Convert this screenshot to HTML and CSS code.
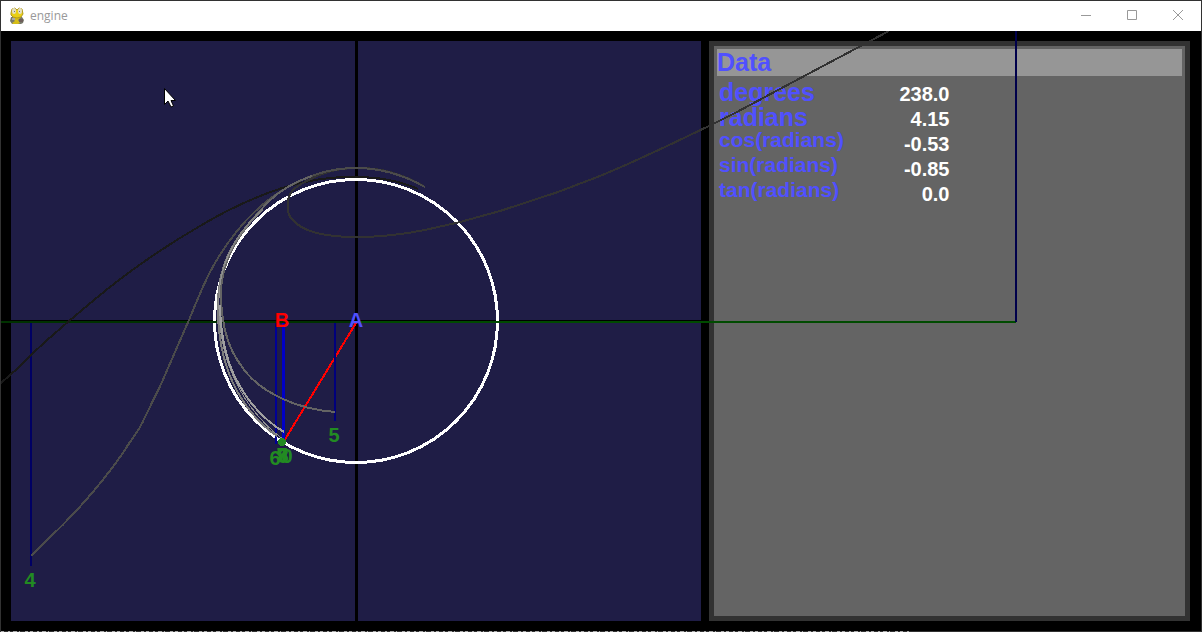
FILE: index.html
```html
<!DOCTYPE html>
<html lang="en">
<head>
<meta charset="utf-8">
<title>engine</title>
<link rel="stylesheet" href="styles.css">
</head>
<body>
<div class="window">
  <header class="titlebar">
    <svg class="logo" viewBox="0 0 16 18" width="16" height="18" aria-hidden="true">
      <path d="M2 10h11l2 3-1 3-2 1H3l-2-3z" fill="#77796b"/>
      <path d="M4 10h8l-3 3 2 3-2 1H4l-1-1 3-2-2-2z" fill="#d5bd16"/>
      <path d="M2 6l1-4 3-1 2 2 2-2 3 1 1 5-2 3-4 1-4-1-2-2z" fill="#e9cf16" stroke="#b39b1c"/>
      <ellipse cx="5" cy="4" rx="2" ry="3" fill="#e4dfc4"/><ellipse cx="11" cy="4" rx="2" ry="3" fill="#e4dfc4"/>
      <path d="M5 4h1v1H5zM10 4h1v1h-1z" fill="#777"/>
      <path d="M3 11h3v2H3z" fill="#aaa"/><path d="M10 12h4v3h-4z" fill="#6e5e5a"/>
    </svg>
    <h1 class="title">engine</h1>
    <button class="control" aria-label="Minimize"><svg width="12" height="12" viewBox="0 0 12 12"><path d="M1 5.500h10"/></svg></button>
    <button class="control" aria-label="Maximize"><svg width="12" height="12" viewBox="0 0 12 12"><path d="M1.500 .5h9v9h-9z"/></svg></button>
    <button class="control" aria-label="Close"><svg width="12" height="12" viewBox="0 0 12 12"><path d="M1 0l10 10M11 0L1 10"/></svg></button>
  </header>
  <main class="stage">
    <section class="plot" aria-label="Unit circle"></section>
    <aside class="data">
      <h2 class="data-title">Data</h2>
      <table class="values">
        <tr><th scope="row" class="large">degrees</th><td>238.0</td></tr>
        <tr><th scope="row" class="large">radians</th><td>4.15</td></tr>
        <tr><th scope="row">cos(radians)</th><td>-0.53</td></tr>
        <tr><th scope="row">sin(radians)</th><td>-0.85</td></tr>
        <tr><th scope="row">tan(radians)</th><td>0.0</td></tr>
      </table>
    </aside>
    <svg class="canvas" aria-label="Circle approximation curves">
      <g transform="translate(-1 -31)" fill="none" shape-rendering="crispEdges">
        <path d="M356.500 41V621M11 321.500H701" stroke="#000" stroke-width="3"/>
        <circle cx="356" cy="321" r="141.500" stroke="#fff" stroke-width="3"/>
        <path d="M356 323L284 441" stroke="#f00" stroke-width="2"/>
        <g stroke-width="2">
          <path d="M1 322H356" stroke="#003200"/>
          <path d="M356 322H1016" stroke="#004b00"/>
          <path d="M1016 31V322" stroke="#00004b"/>
          <path d="M31 323V566" stroke="#000064"/>
          <path d="M335 323V421" stroke="#00007d"/>
          <path d="M276 323V444" stroke="#000096"/>
          <path d="M283.500 323V440" stroke="#0000c8" stroke-width="3"/>
        </g>
        <g stroke-width="2">
          <path d="M1 383L18 368L31 355L46 341L69 321L94 300Q143 259 200 226Q240 202 282 188Q320 176 356 177Q391 177 418 189" stroke="#191919"/>
          <path d="M889 31L823 66L735 113L709 126L665 147L628 164L600 176L558 192L500 211L460 222L425 230Q390 237 356 237C325 237 306 231 297 224Q288 217 288 210V200Q290 191 298 186Q326 168 356 168Q391 167 425 187" stroke="#323232"/>
          <path d="M31 556L46 541Q70 519 92 493Q115 466 130 442Q140 429 146 415Q162 384 175 352L189 320C201 291 211 263 237 231Q258 205 283 190Q318 168 356 168Q391 168 425 187" stroke="#4b4b4b"/>
          <path d="M335 412Q307 410 283 399Q254 386 240 364Q223 341 221 300C219 260 240 232 268 202Q287 184 312 176" stroke="#646464"/>
          <path d="M277 436Q249 417 233 383Q217 348 218 303C218 265 234 236 263 209" stroke="#7d7d7d"/>
          <path d="M284 440Q252 416 236 382Q220 350 219 309C218 280 224 262 233 246" stroke="#919191" stroke-width="1"/>
          <path d="M284 432Q254 414 236 379Q221 350 220 305" stroke="#a0a0a0"/>
        </g>
        <circle cx="282" cy="442" r="4" fill="#228b22"/>
      </g>
      <g transform="translate(-1 -31)" class="labels">
        <text x="356" y="327" class="point-a">A</text>
        <text x="282" y="327" class="point-b">B</text>
        <text x="30" y="587">4</text>
        <text x="334" y="442">5</text>
        <text x="275" y="465">6</text>
        <text x="282" y="462">7</text>
        <text x="283" y="463">8</text>
        <text x="282" y="462">9</text>
        <text x="287" y="463">0</text>
      </g>
      <path class="cursor" d="M164.500 57.500V73.500L168 70L171 76L173.500 75L171 69.500H175.500Z"/>
    </svg>
  </main>
  <svg class="edge" aria-hidden="true"><path d="M0 .5H910"/></svg>
</div>
</body>
</html>
```
FILE: styles.css
```css
* { box-sizing: border-box; }
body { margin: 0; background: #000; font-family: "Liberation Sans", Arial, sans-serif; }
.window { position: relative; display: flex; flex-direction: column; min-height: 100vh; border: 1px solid #323232; background: #000; }
.titlebar { display: flex; align-items: center; height: 30px; padding-left: 8px; background: #fff; }
.logo { margin-right: 5px; }
.title { flex: 1; margin: 0; font: 12px/28px "Open Sans", "Noto Sans", sans-serif; color: #999; }
.control { display: flex; align-items: center; justify-content: center; width: 46px; height: 30px; padding: 0; border: 0; background: #fff; }
.control path { fill: none; stroke: #999; }
.stage { position: relative; flex: 1; display: grid; grid-template-columns: 690fr 481fr; gap: 8px; padding: 10px 11px 10px 10px; overflow: hidden; }
.plot { background: #1f1d46; }
.data { padding: 3px; border: 5px solid #323232; background: #646464; }
.data-title { margin: 0 0 6px; background: #969696; color: #5050ff; font-size: 25px; line-height: 27px; }
.values { border-collapse: collapse; width: 50%; font-weight: bold; }
.values th, .values td { height: 25px; padding: 0; vertical-align: top; }
.values th { padding-left: 2px; text-align: left; color: #5050ff; font-size: 21px; line-height: 16px; }
.values .large { font-size: 25px; line-height: 20px; }
.values td { text-align: right; color: #fff; font-size: 20px; line-height: 25px; }
.canvas { position: absolute; inset: 0; width: 100%; height: 100%; pointer-events: none; }
.labels { fill: #228b22; font-size: 20px; font-weight: bold; text-anchor: middle; }
.point-a { fill: #5050ff; }
.point-b { fill: #f00; }
.cursor { fill: #fff; stroke: #000; transform: translateX(-1px); }
.edge { position: absolute; left: 0; bottom: -1px; width: 100%; height: 1px; }
.edge path { stroke: #aaa; stroke-dasharray: 3 4 2 3 4 2 1 5 3 2; }
```
